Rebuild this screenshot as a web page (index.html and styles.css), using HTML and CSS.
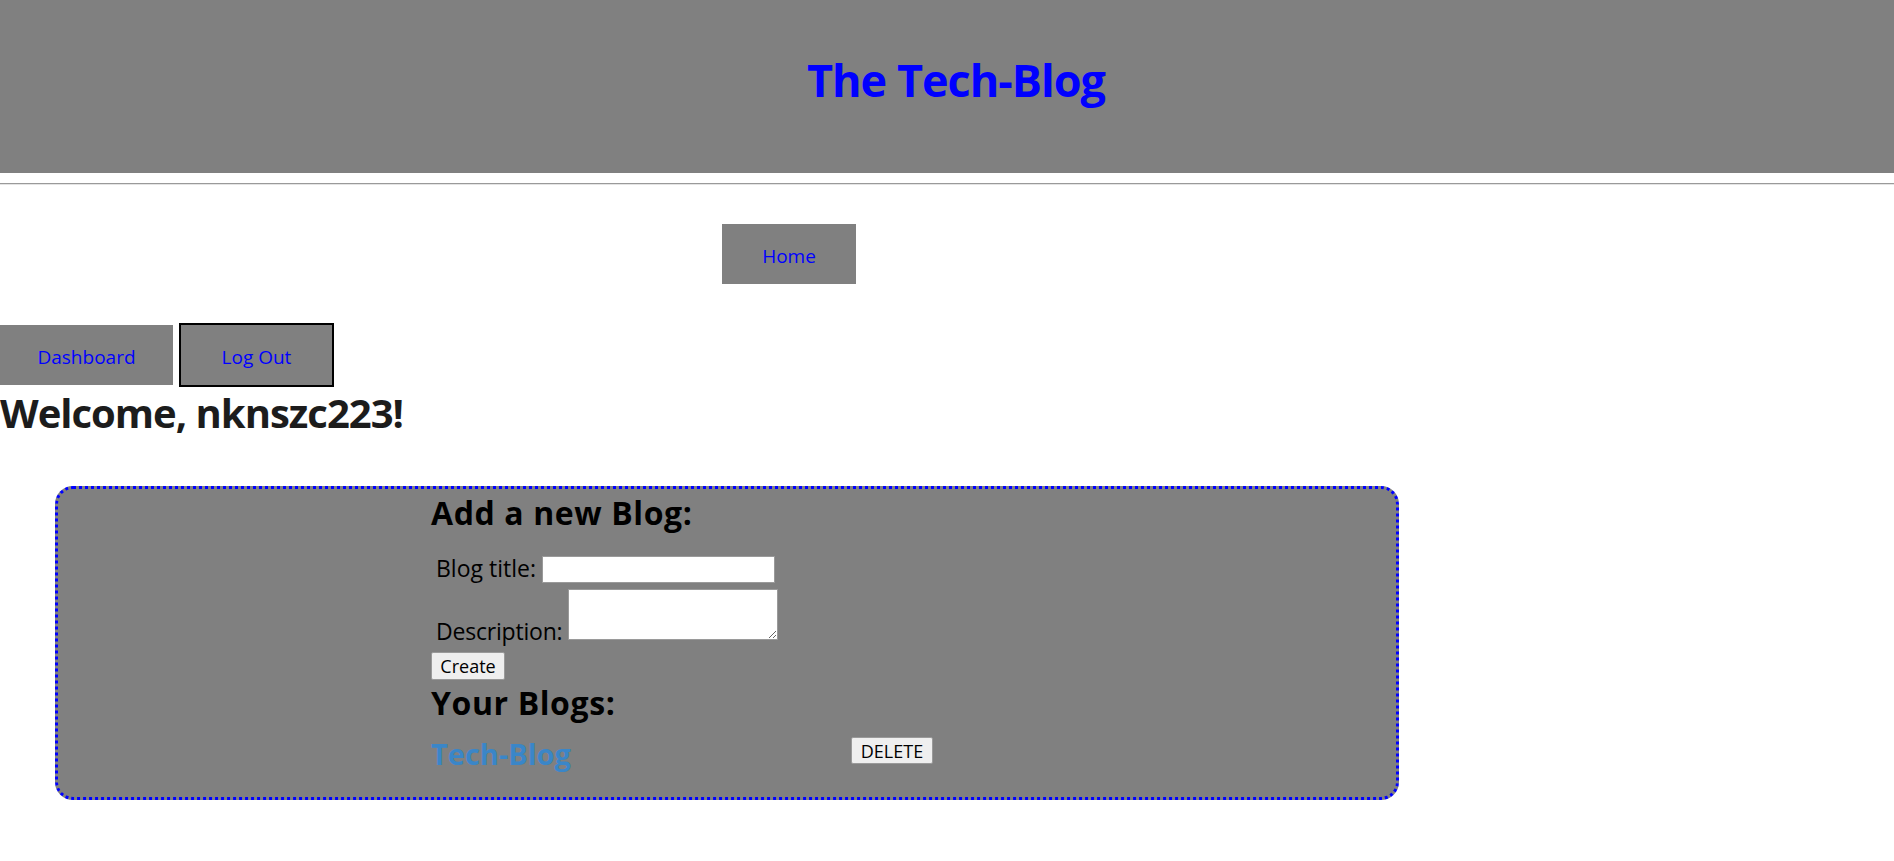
FILE: index.html
```html
<!DOCTYPE html>
<html lang="en">
<head>
<meta charset="utf-8">
<title>The Tech-Blog</title>
<link rel="stylesheet" href="styles.css">
</head>
<body>
<header class="site-header">
  <h1 class="site-title">The Tech-Blog</h1>
</header>
<hr class="divider">
<nav class="nav-top">
  <a class="nav-btn nav-home" href="#">Home</a>
</nav>
<nav class="nav-user">
  <a class="nav-btn nav-dash" href="#">Dashboard</a>
  <a class="nav-btn nav-logout" href="#">Log Out</a>
</nav>
<h1 class="welcome">Welcome, nknszc223!</h1>
<section class="card">
  <div class="card-inner">
    <h2 class="card-heading">Add a new Blog:</h2>
    <form class="blog-form">
      <div class="form-row row-title">
        <label class="form-label" for="title">Blog title:</label>
        <input class="form-input" id="title" type="text">
      </div>
      <div class="form-row row-desc">
        <label class="form-label label-desc" for="desc">Description:</label>
        <textarea class="form-textarea" id="desc"></textarea>
      </div>
      <button class="btn btn-create" type="button">Create</button>
    </form>
    <h2 class="card-heading heading-yours">Your Blogs:</h2>
    <div class="blog-row">
      <a class="blog-link" href="#">Tech-Blog</a>
      <button class="btn btn-delete" type="button">DELETE</button>
    </div>
  </div>
</section>
</body>
</html>
```

FILE: styles.css
```css
html, body {
  margin: 0;
  padding: 0;
  background: #ffffff;
  font-family: "Open Sans", "Noto Sans", sans-serif;
}

.site-header {
  box-sizing: border-box;
  height: 173px;
  padding-top: 53px;
  padding-left: 18px;
  background: #808080;
  text-align: center;
}

.site-title {
  margin: 0;
  font-size: 45px;
  line-height: 54px;
  letter-spacing: -1px;
  font-weight: 700;
  color: #0000ff;
}

.divider {
  margin: 10px 0 0 0;
  border: 0;
  border-top: 1px solid #9a9a9a;
  border-bottom: 1px solid #e4e4e4;
  height: 0;
}

.nav-top {
  display: flex;
  padding-top: 39px;
  padding-left: 722px;
}

.nav-user {
  display: flex;
  align-items: center;
  gap: 6px;
  margin-top: 39px;
  height: 64px;
}

.nav-btn {
  display: block;
  box-sizing: border-box;
  height: 60px;
  padding-top: 5px;
  line-height: 55px;
  text-align: center;
  background: #808080;
  color: #0000ff;
  text-decoration: none;
  font-size: 19px;
}

.nav-home { width: 134px; }
.nav-dash { width: 173px; }
.nav-logout {
  width: 155px;
  height: 64px;
  border: 2px solid #000000;
}

.welcome {
  margin: 2px 0 0 0;
  font-size: 40px;
  line-height: 48px;
  letter-spacing: -1px;
  font-weight: 700;
  color: #1c1c1c;
}

.card {
  box-sizing: border-box;
  width: 1344px;
  margin: 49px 0 0 55px;
  border: 3px dotted #0000ff;
  border-radius: 18px;
  background: #808080;
}

.card-inner {
  padding: 4px 0 23px 373px;
}

.card-heading {
  margin: 0;
  font-size: 32px;
  line-height: 40px;
  letter-spacing: 0.6px;
  font-weight: 700;
  color: #000000;
}

.blog-form {
  margin: 0;
}

.form-row {
  display: flex;
}

.row-title {
  margin-top: 23px;
  align-items: flex-start;
}

.row-desc {
  margin-top: 6px;
  align-items: flex-end;
}

.form-label {
  margin-left: 5px;
  margin-right: 6px;
  font-size: 23px;
  line-height: 25px;
  color: #000000;
}

.label-desc {
  margin-right: 6px;
  margin-bottom: -4px;
  letter-spacing: -0.2px;
}

.form-input {
  box-sizing: border-box;
  width: 233px;
  height: 27px;
  margin: 0;
  border: 1px solid #9a9a9a;
  background: #ffffff;
}

.form-textarea {
  box-sizing: border-box;
  width: 210px;
  height: 51px;
  margin: 0;
  border: 1px solid #9a9a9a;
  background: #ffffff;
}

.btn {
  display: block;
  box-sizing: border-box;
  margin: 0;
  padding: 0;
  background: #efefef;
  border: 1px solid #9a9a9a;
  border-radius: 2px;
  color: #000000;
  font-family: "Open Sans", "Noto Sans", sans-serif;
  font-size: 18px;
  text-align: center;
}

.btn-create {
  width: 74px;
  height: 28px;
  margin-top: 12px;
}

.heading-yours {
  margin-top: 3px;
}

.blog-row {
  display: flex;
  align-items: flex-start;
  margin-top: 11px;
}

.blog-link {
  width: 420px;
  font-size: 29px;
  line-height: 40px;
  font-weight: 700;
  color: #3a86c8;
  text-decoration: none;
}

.btn-delete {
  width: 82px;
  height: 27px;
  margin-top: 3px;
}
```
